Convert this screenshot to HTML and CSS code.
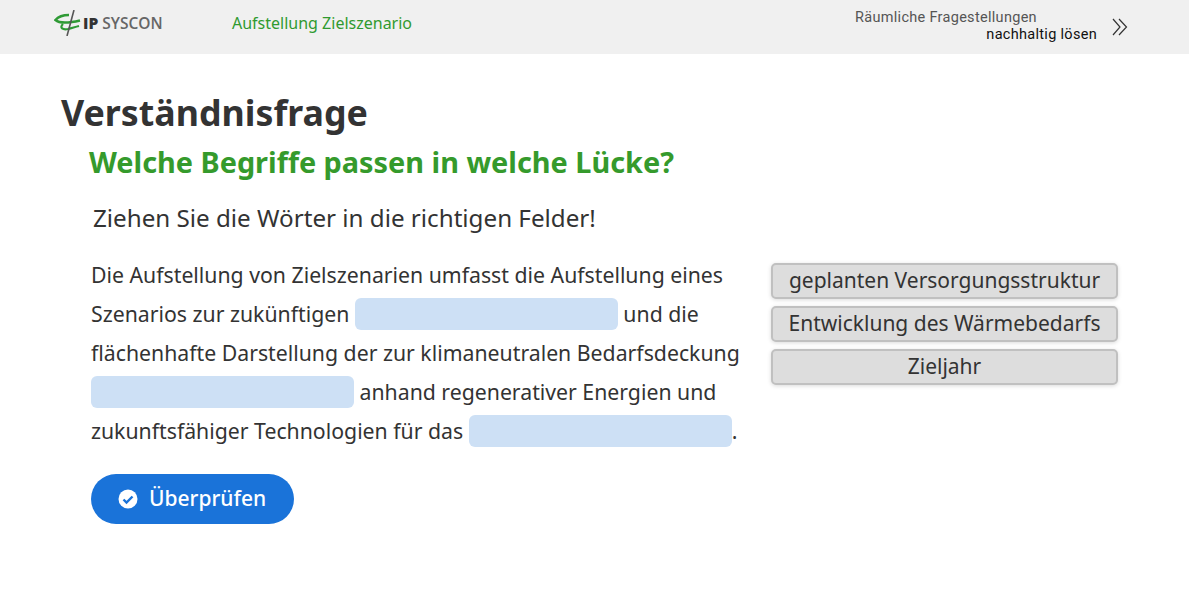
FILE: index.html
```html
<!DOCTYPE html>
<html lang="de">
<head>
    <meta charset="UTF-8">
    <meta name="viewport" content="width=device-width, initial-scale=1.0">
    <title>Aufstellung Zielszenario</title>
    <link rel="stylesheet" href="styles.css">
</head>
<body>
    <header class="top-bar">
        <div class="brand">
            <svg class="brand-mark" width="27" height="26" viewBox="0 0 27 26">
                <path d="M15 5 C9 5 4 7 1.500 10 C6 14 15 13 26 10.500" fill="none" stroke="#2f9a35" stroke-width="2.600"/>
                <path d="M9 14 C5 18 9 20 14 19 C18 18 21 17 25 16" fill="none" stroke="#2f9a35" stroke-width="2.200"/>
                <path d="M20 0 L13 26" fill="none" stroke="#555" stroke-width="1.600"/>
            </svg>
            <span class="brand-name"><b>IP</b> SYSCON</span>
        </div>
        <div class="page-title">Aufstellung Zielszenario</div>
        <div class="slogan">
            <div class="slogan-text">
                <div>Räumliche Fragestellungen</div>
                <div class="slogan-strong">nachhaltig lösen</div>
            </div>
            <svg class="slogan-arrow" width="16" height="18" viewBox="0 0 16 18">
                <path d="M1 1 L8 9 L1 17 M7 1 L14.500 9 L7 17" fill="none" stroke="#333" stroke-width="1.200"/>
            </svg>
        </div>
    </header>

    <main class="content">
        <h1>Verständnisfrage</h1>
        <h2>Welche Begriffe passen in welche Lücke?</h2>
        <p class="task">Ziehen Sie die Wörter in die richtigen Felder!</p>

        <div class="quiz">
            <div class="quiz-left">
                <p class="cloze">
                    Die Aufstellung von Zielszenarien umfasst die Aufstellung eines<br>
                    Szenarios zur zukünftigen <span class="blank"></span> und die<br>
                    flächenhafte Darstellung der zur klimaneutralen Bedarfsdeckung<br>
                    <span class="blank"></span> anhand regenerativer Energien und<br>
                    zukunftsfähiger Technologien für das <span class="blank"></span>.
                </p>
                <button class="check-btn">
                    <svg width="20" height="20" viewBox="0 0 20 20">
                        <circle cx="10" cy="10" r="9.500" fill="#fff"/>
                        <path d="M5.500 10.500 L8.500 13.500 L14.500 7.500" fill="none" stroke="#1a73d9" stroke-width="2.400"/>
                    </svg>
                    <span class="check-label">Überprüfen</span>
                </button>
            </div>
            <div class="word-list">
                <div class="word">geplanten Versorgungsstruktur</div>
                <div class="word">Entwicklung des Wärmebedarfs</div>
                <div class="word">Zieljahr</div>
            </div>
        </div>
    </main>
</body>
</html>
```

FILE: styles.css
```css
body {
    margin: 0;
    font-family: "Noto Sans", sans-serif;
    color: #333;
    background-color: white;
}
.top-bar {
    display: flex;
    align-items: center;
    box-sizing: border-box;
    height: 54px;
    padding: 0 61px 8px 54px;
    background-color: #f0f0f0;
}
.brand {
    display: flex;
    align-items: center;
    gap: 2px;
    width: 178px;
}
.brand-mark {
    flex: none;
}
.brand-name {
    font-family: "Open Sans", sans-serif;
    font-size: 15.500px;
    font-weight: 600;
    color: #666;
}
.brand-name b {
    color: #333;
}
.page-title {
    flex: 1;
    font-size: 16px;
    color: #2f9a2f;
}
.slogan {
    display: flex;
    align-items: center;
    gap: 15px;
    margin-top: 5px;
    font-family: "Roboto", sans-serif;
    font-size: 14.500px;
    letter-spacing: 0.3px;
    line-height: 17px;
    color: #555;
}
.slogan-text {
    width: 242px;
}
.slogan-strong {
    text-align: right;
    color: #111;
}
.slogan-arrow {
    margin-top: 3px;
}
.content {
    padding: 35px 71px 0 61px;
}
h1 {
    margin: 0;
    font-size: 35.750px;
    line-height: 46px;
    font-weight: 700;
}
h2 {
    margin: 8px 0 0 28px;
    font-size: 28.850px;
    line-height: 38px;
    font-weight: 700;
    color: #359a2c;
}
.task {
    margin: 21px 0 0 32px;
    font-size: 24.200px;
    line-height: 32px;
}
.quiz {
    display: flex;
    justify-content: space-between;
    margin: 21px 0 0 30px;
}
.quiz-left {
    width: 655px;
}
.cloze {
    margin: 0;
    font-size: 21.250px;
    line-height: 39px;
}
.blank {
    display: inline-block;
    width: 263px;
    height: 32px;
    vertical-align: -8px;
    border-radius: 6px;
    background-color: #cde0f5;
}
.check-btn {
    display: flex;
    align-items: center;
    gap: 11px;
    height: 50px;
    margin-top: 24px;
    padding: 0 28px 0 27px;
    font-family: inherit;
    font-size: 21px;
    font-weight: 500;
    line-height: 26px;
    color: white;
    background-color: #1a73d9;
    border: none;
    border-radius: 25px;
    cursor: pointer;
}
.check-label {
    margin-top: -2px;
}
.word-list {
    display: flex;
    flex-direction: column;
    gap: 7px;
    width: 347px;
    margin-top: 8px;
}
.word {
    height: 36px;
    line-height: 31px;
    box-sizing: border-box;
    text-align: center;
    font-size: 21px;
    background-color: #dddddd;
    border: 2px solid #c0c0c0;
    border-radius: 5px;
    box-shadow: 0 1px 4px rgba(0,0,0,0.15);
}
```
